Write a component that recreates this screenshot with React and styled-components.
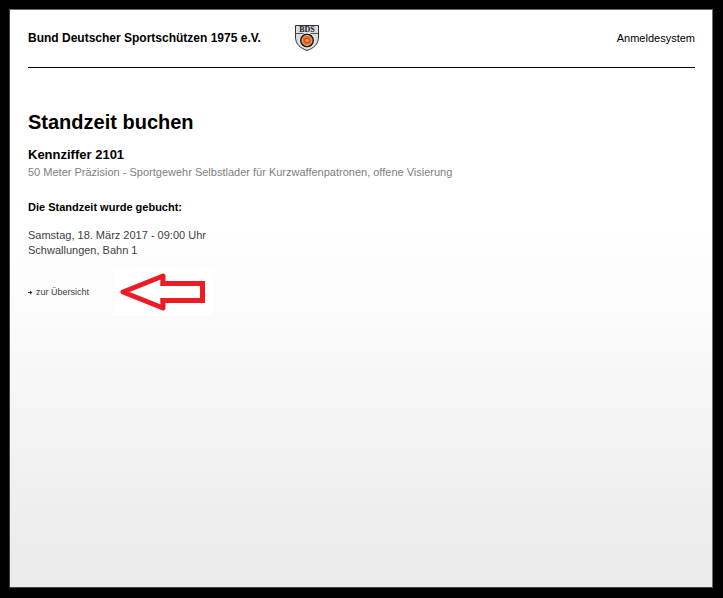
import React from "react";
import styled, { createGlobalStyle } from "styled-components";

const GlobalStyle = createGlobalStyle`
  * { box-sizing: border-box; }
  body {
    margin: 0;
    background: #000;
    font-family: "Liberation Sans", Arial, sans-serif;
    font-size: 11px;
    color: #000;
  }
`;

const Page = styled.div`
  display: flex;
  min-height: 100vh;
  padding: 9px 10px 10px 9px;
`;

const Panel = styled.div`
  flex: 1;
  min-width: 0;
  padding: 14px 17px 24px 18px;
  border: 1px solid #6c6c6c;
  border-left-color: #444;
  border-bottom-color: #444;
  background: linear-gradient(#fff 38%, #fbfbfb 52%, #ebebeb 96%);
`;

const Header = styled.header`
  display: flex;
  align-items: center;
  height: 44px;
  padding-bottom: 15px;
  border-bottom: 1px solid #000;
`;

const Club = styled.div`
  width: 266px;
  font-size: 12px;
  font-weight: bold;
`;

const SystemName = styled.div`
  margin-left: auto;
`;

const Title = styled.h1`
  margin: 42px 0 0;
  font-size: 20px;
  line-height: 24px;
`;

const Discipline = styled.h2`
  margin: 12px 0 0;
  font-size: 13px;
  line-height: 18px;
`;

const Description = styled.p`
  margin: 0;
  line-height: 16px;
  color: #808080;
`;

const Confirmation = styled.h3`
  margin: 19px 0 0;
  font-size: 11px;
  line-height: 16px;
`;

const Details = styled.p`
  margin: 13px 0 0;
  line-height: 15px;
  color: #404040;
`;

const Actions = styled.div`
  display: flex;
  align-items: center;
  gap: 24px;
  margin-top: 10px;
`;

const BackLink = styled.a`
  display: flex;
  align-items: center;
  gap: 3px;
  font-size: 9px;
  line-height: 12px;
  color: #404040;
  text-decoration: none;
`;

const Pointer = styled.div`
  display: flex;
  padding: 4px 6px;
  background: #fff;
`;

function Crest() {
  return (
    <svg width="26" height="28" viewBox="0 0 26 28" role="img" aria-label="BDS">
      <path d="M1.5 1.5H24.5V13C24.5 20 20 24 13 26.5C6 24 1.5 20 1.5 13Z" fill="#dcdcdc" stroke="#333" />
      <path d="M2 9.5H24" stroke="#555" />
      <text x="13" y="8" textAnchor="middle" fontFamily="Liberation Serif, serif" fontSize="8" fontWeight="bold" fill="#222">BDS</text>
      <circle cx="13" cy="16.5" r="7.5" fill="#1c1c18" stroke="#f6f6f6" />
      <circle cx="13" cy="16.5" r="5" fill="#ef6b33" stroke="#e9bd6a" />
      <circle cx="13" cy="16.5" r="2.4" fill="#f49a3b" stroke="#c83524" />
    </svg>
  );
}

function LinkArrow() {
  return (
    <svg width="5" height="5" viewBox="0 0 5 5" aria-hidden="true">
      <path d="M0 2H2V0.5L4.5 2.5L2 4.5V3H0Z" fill="#333" />
    </svg>
  );
}

function RedArrow() {
  return (
    <svg width="88" height="40" viewBox="0 0 88 40" aria-hidden="true">
      <g fill="none" stroke="#ed1c24" strokeWidth="5">
        <path d="M44 11.5V4L4 20L44 36V28.5" strokeLinejoin="round" strokeLinecap="square" />
        <path d="M44 11.5H83.5V28.5H44" strokeLinecap="square" />
      </g>
    </svg>
  );
}

export default function App() {
  return (
    <>
      <GlobalStyle />
      <Page>
        <Panel>
          <Header>
            <Club>Bund Deutscher Sportschützen 1975 e.V.</Club>
            <Crest />
            <SystemName>Anmeldesystem</SystemName>
          </Header>
          <main>
            <Title>Standzeit buchen</Title>
            <Discipline>Kennziffer 2101</Discipline>
            <Description>
              50 Meter Präzision - Sportgewehr Selbstlader für Kurzwaffenpatronen, offene Visierung
            </Description>
            <Confirmation>Die Standzeit wurde gebucht:</Confirmation>
            <Details>
              Samstag, 18. März 2017 - 09:00 Uhr
              <br />
              Schwallungen, Bahn 1
            </Details>
            <Actions>
              <BackLink href="#">
                <LinkArrow />
                zur Übersicht
              </BackLink>
              <Pointer>
                <RedArrow />
              </Pointer>
            </Actions>
          </main>
        </Panel>
      </Page>
    </>
  );
}
